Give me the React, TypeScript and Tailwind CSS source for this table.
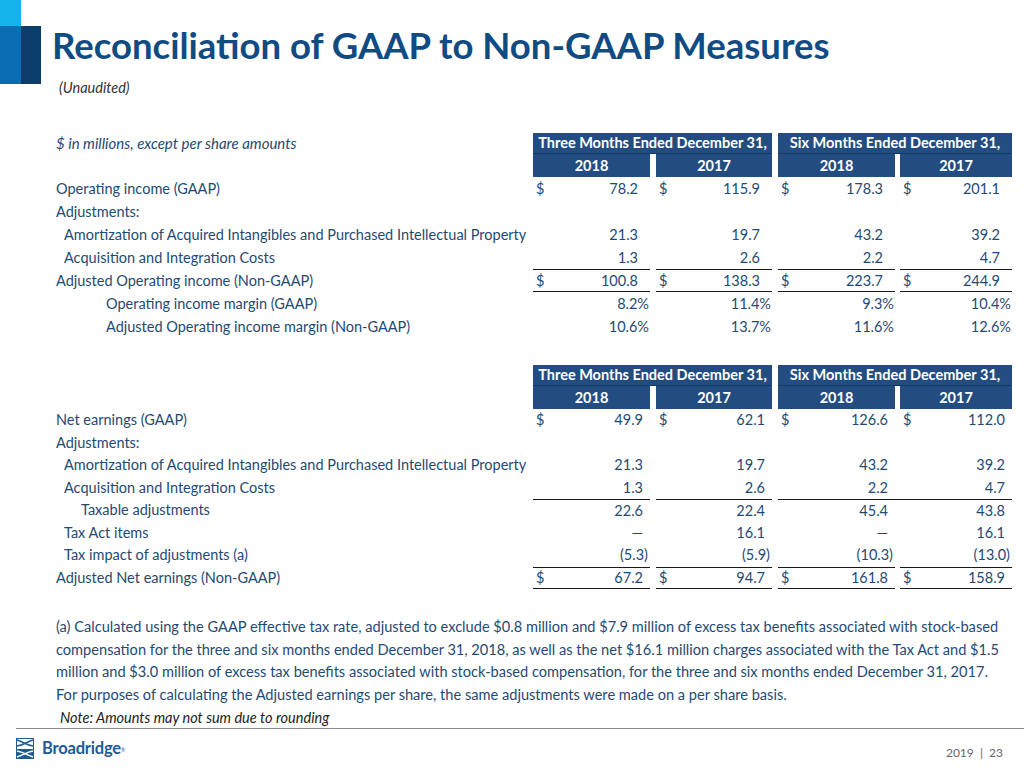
import React from "react";

const cellW = [
  "w-[117px]",
  "ml-[6px] w-[116px]",
  "ml-[6px] w-[117px]",
  "ml-[5px] w-[112px]",
];

type RowProps = {
  label: string;
  indent?: string;
  values: string[];
  dollar?: boolean;
  top?: boolean;
  bottom?: boolean;
  pct?: boolean;
  joinTop?: boolean;
  t2?: boolean;
};

function Row({ label, indent = "pl-0", values, dollar, top, bottom, pct, joinTop, t2 }: RowProps) {
  return (
    <div className={t2 ? "flex h-[22.5px] items-center" : "flex h-[23px] items-center"}>
      <div className={`w-[477px] whitespace-nowrap ${indent}`}>{label}</div>
      {values.map((v, i) => {
        let w = cellW[i];
        if (joinTop && i === 3) w = "w-[117px] pl-[5px]";
        const paren = v.startsWith("(");
        const pr = pct ? "pr-[1px]" : t2 ? (paren ? "pr-[2px]" : "pr-[7px]") : "pr-[12px]";
        return (
          <div
            key={i}
            className={`${w} flex h-full items-center justify-between ${top ? "border-t border-[#1a1a1a]" : ""} ${bottom ? "border-b border-[#1a1a1a]" : ""}`}
          >
            <span className="pl-[3px]">{dollar ? "$" : ""}</span>
            <span className={pr}>{v}</span>
          </div>
        );
      })}
    </div>
  );
}

function Header({ caption }: { caption?: string }) {
  return (
    <div className="flex flex-col">
      <div className="flex h-[21px] items-center">
        <div className="w-[477px] text-[15px] italic">{caption}</div>
        <div className="flex h-full w-[239px] items-center justify-center border-b border-[#173a63] bg-[#234d80] font-bold text-white">
          Three Months Ended December 31,
        </div>
        <div className="ml-[6px] flex h-full w-[234px] items-center justify-center border-b border-[#173a63] bg-[#234d80] font-bold text-white">
          Six Months Ended December 31,
        </div>
      </div>
      <div className="flex h-[23px]">
        <div className="w-[477px]" />
        {["2018", "2017", "2018", "2017"].map((y, i) => (
          <div key={i} className={`${cellW[i]} flex items-center justify-center bg-[#234d80] font-bold text-white`}>
            {y}
          </div>
        ))}
      </div>
    </div>
  );
}

function BroadridgeMark() {
  return (
    <svg width="18" height="21" viewBox="0 0 18 21">
      <rect x="0.5" y="0.5" width="17" height="20" fill="white" stroke="#1d5b96" strokeWidth="1" />
      <rect x="0" y="11" width="18" height="10" fill="#1d5b96" />
      <path d="M1 2 C 7 4, 11 7, 17 8" stroke="#1d5b96" strokeWidth="1.6" fill="none" />
      <path d="M1 8 C 7 7, 11 4, 17 2" stroke="#1d5b96" strokeWidth="1.6" fill="none" />
      <path d="M1 13 C 7 14, 11 17, 17 19" stroke="white" strokeWidth="1.4" fill="none" />
      <path d="M1 19 C 7 17, 11 14, 17 13" stroke="white" strokeWidth="1.4" fill="none" />
    </svg>
  );
}

export default function App() {
  return (
    <div className="relative h-[768px] w-[1024px] overflow-hidden bg-white font-['Lato','Liberation_Sans',sans-serif] text-[14.5px] text-[#1f4a74]">
      {/* title band */}
      <div className="flex h-[84px] items-start">
        <div className="flex h-[84px] w-[41px] flex-col">
          <div className="h-[26px] w-[21px] bg-[#16b4ec]" />
          <div className="flex flex-1">
            <div className="w-[21px] bg-[#0a6cb2]" />
            <div className="w-[20px] bg-[#0c3d6b]" />
          </div>
        </div>
        <div className="ml-[11px] flex flex-col">
          <h1 className="mt-[24px] text-[36.5px] leading-[42px] font-bold whitespace-nowrap text-[#114b83]">
            Reconciliation of GAAP to Non-GAAP Measures
          </h1>
          <div className="mt-[11px] ml-[7px] text-[14.5px] text-[#333] italic">(Unaudited)</div>
        </div>
      </div>

      <div className="mt-[49px] pl-[56px]">
        <Header caption="$ in millions,  except per share amounts" />
        <Row label="Operating income (GAAP)" values={["78.2", "115.9", "178.3", "201.1"]} dollar />
        <Row label="Adjustments:" values={["", "", "", ""]} />
        <Row
          label="Amortization of Acquired Intangibles and Purchased Intellectual Property"
          indent="pl-[8px]"
          values={["21.3", "19.7", "43.2", "39.2"]}
        />
        <Row label="Acquisition and Integration Costs" indent="pl-[8px]" values={["1.3", "2.6", "2.2", "4.7"]} />
        <Row
          label="Adjusted Operating income (Non-GAAP)"
          values={["100.8", "138.3", "223.7", "244.9"]}
          dollar
          top
          bottom
        />
        <Row label="Operating income margin (GAAP)" indent="pl-[50px]" values={["8.2%", "11.4%", "9.3%", "10.4%"]} pct />
        <Row
          label="Adjusted Operating income margin (Non-GAAP)"
          indent="pl-[50px]"
          values={["10.6%", "13.7%", "11.6%", "12.6%"]}
          pct
        />

        <div className="mt-[27px]">
          <Header />
        </div>
        <Row t2 label="Net earnings (GAAP)" values={["49.9", "62.1", "126.6", "112.0"]} dollar />
        <Row t2 label="Adjustments:" values={["", "", "", ""]} />
        <Row
          t2
          label="Amortization of Acquired Intangibles and Purchased Intellectual Property"
          indent="pl-[8px]"
          values={["21.3", "19.7", "43.2", "39.2"]}
        />
        <Row t2 label="Acquisition and Integration Costs" indent="pl-[8px]" values={["1.3", "2.6", "2.2", "4.7"]} />
        <Row t2 label="Taxable adjustments" indent="pl-[25px]" values={["22.6", "22.4", "45.4", "43.8"]} top joinTop />
        <Row t2 label="Tax Act items" indent="pl-[8px]" values={["—", "16.1", "—", "16.1"]} />
        <Row t2 label="Tax impact of adjustments (a)" indent="pl-[8px]" values={["(5.3)", "(5.9)", "(10.3)", "(13.0)"]} />
        <Row
          t2
          label="Adjusted Net earnings (Non-GAAP)"
          values={["67.2", "94.7", "161.8", "158.9"]}
          dollar
          top
          bottom
        />

        <p className="mt-[27px] text-[14.6px] leading-[22.5px] whitespace-nowrap">
          (a) Calculated using the GAAP effective tax rate, adjusted to exclude $0.8 million and $7.9 million of excess tax benefits associated with stock-based
          <br />
          compensation for the three and six months ended December 31, 2018, as well as the net $16.1 million charges associated with the Tax Act and $1.5
          <br />
          million and $3.0 million of excess tax benefits associated with stock-based compensation, for the three and six months ended December 31, 2017.
          <br />
          For purposes of calculating the Adjusted earnings per share, the same adjustments were made on a per share basis.
        </p>
      </div>

      <div className="mt-[2px] ml-[16px] border-b border-[#8a8a8a] pl-[44px] text-[14.5px] leading-[20px] text-[#222] italic">
        Note: Amounts may not sum due to rounding
      </div>

      <div className="mt-[9px] flex items-start justify-between pr-[21px] pl-[16px]">
        <div className="flex items-center gap-[8px]">
          <BroadridgeMark />
          <span className="text-[16.5px] leading-[21px] font-bold tracking-[-0.2px] text-[#1d5b96]">
            Broadridge<sup className="text-[5px] font-normal">®</sup>
          </span>
        </div>
        <div className="mt-[8px] text-[12px] leading-[14px] text-[#666]">2019&nbsp;&nbsp;|&nbsp;&nbsp;23</div>
      </div>
    </div>
  );
}
